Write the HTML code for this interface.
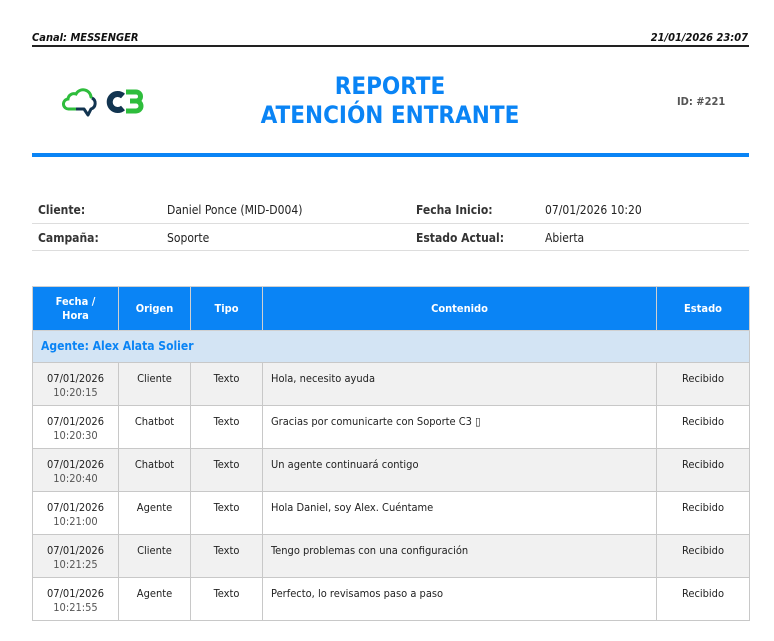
<!DOCTYPE html><html><head><meta charset="utf-8"><style>
*{margin:0;padding:0;box-sizing:border-box}
body{width:774px;height:641px;background:#fff;font-family:"DejaVu Sans Condensed","DejaVu Sans","Liberation Sans",sans-serif;color:#222;position:relative;overflow:hidden;font-size:11px}
.a{position:absolute;white-space:nowrap}
table{position:absolute;left:32px;top:286px;width:717px;border-collapse:collapse;table-layout:fixed}
td,th{border:1px solid #c8c8c8;font-size:11px;text-align:center;vertical-align:top}
th{background:#0a84f5;color:#fff;font-weight:bold;vertical-align:middle;height:44px;border-color:#d0d0d0;line-height:14px}
td{height:43px;padding-top:9px;line-height:14px}
tr.g td{background:#f1f1f1}
td.c{text-align:left;padding-left:8px}
.t{color:#555}
.ag td{background:#d3e4f4;color:#0a84f5;font-weight:bold;font-size:12px;text-align:left;height:32px;padding:8px 0 0 8px}
</style></head><body>
<div class="a" style="left:32px;top:31px;font-weight:bold;font-style:italic;font-size:11px;color:#111">Canal: MESSENGER</div>
<div class="a" style="right:26px;top:31px;font-weight:bold;font-style:italic;font-size:11px;color:#111">21/01/2026 23:07</div>
<div class="a" style="left:32px;top:45px;width:717px;height:2px;background:#222"></div>
<svg class="a" style="left:62px;top:86px" width="84" height="32" viewBox="0 0 84 32">
<path d="M14 23 H7 a5 5 0 0 1 -1-10 a6 6 0 0 1 8-5 a8 8 0 0 1 15 3" fill="none" stroke="#2ebd3c" stroke-width="3" stroke-linecap="round"/>
<path d="M14 23 H22 L26 29 L29 23 a6 6 0 0 0 1-11" fill="none" stroke="#123450" stroke-width="3" stroke-linejoin="round"/>
<path d="M61 10 a8 8 0 1 0 0 12" fill="none" stroke="#123450" stroke-width="6"/>
<path d="M64 6 h10 a4.5 4.5 0 0 1 0 9 h-6 h6 a5 5 0 0 1 0 10 h-10" fill="none" stroke="#2ebd3c" stroke-width="5"/>
</svg>
<div class="a" style="left:200px;top:72px;width:380px;text-align:center;color:#0a84f5;font-weight:bold;font-size:24px;line-height:29px">REPORTE<br>ATENCIÓN ENTRANTE</div>
<div class="a" style="left:677px;top:95px;font-weight:bold;color:#555;font-size:11px">ID: #221</div>
<div class="a" style="left:32px;top:153px;width:717px;height:4px;background:#0a84f5"></div>
<div class="a" style="left:38px;top:203px;font-weight:bold;color:#333;font-size:12px">Cliente:</div>
<div class="a" style="left:167px;top:203px;font-size:12px">Daniel Ponce (MID-D004)</div>
<div class="a" style="left:416px;top:203px;font-weight:bold;color:#333;font-size:12px">Fecha Inicio:</div>
<div class="a" style="left:545px;top:203px;font-size:12px">07/01/2026 10:20</div>
<div class="a" style="left:32px;top:223px;width:717px;height:1px;background:#ddd"></div>
<div class="a" style="left:38px;top:231px;font-weight:bold;color:#333;font-size:12px">Campaña:</div>
<div class="a" style="left:167px;top:231px;font-size:12px">Soporte</div>
<div class="a" style="left:416px;top:231px;font-weight:bold;color:#333;font-size:12px">Estado Actual:</div>
<div class="a" style="left:545px;top:231px;font-size:12px">Abierta</div>
<div class="a" style="left:32px;top:250px;width:717px;height:1px;background:#ddd"></div>
<table>
<colgroup><col style="width:86px"><col style="width:72px"><col style="width:72px"><col style="width:394px"><col style="width:93px"></colgroup>
<tr><th>Fecha /<br>Hora</th><th>Origen</th><th>Tipo</th><th>Contenido</th><th>Estado</th></tr>
<tr class="ag"><td colspan="5">Agente: Alex Alata Solier</td></tr>
<tr class="g"><td>07/01/2026<br><span class="t">10:20:15</span></td><td>Cliente</td><td>Texto</td><td class="c">Hola, necesito ayuda</td><td>Recibido</td></tr>
<tr><td>07/01/2026<br><span class="t">10:20:30</span></td><td>Chatbot</td><td>Texto</td><td class="c">Gracias por comunicarte con Soporte C3 ▯</td><td>Recibido</td></tr>
<tr class="g"><td>07/01/2026<br><span class="t">10:20:40</span></td><td>Chatbot</td><td>Texto</td><td class="c">Un agente continuará contigo</td><td>Recibido</td></tr>
<tr><td>07/01/2026<br><span class="t">10:21:00</span></td><td>Agente</td><td>Texto</td><td class="c">Hola Daniel, soy Alex. Cuéntame</td><td>Recibido</td></tr>
<tr class="g"><td>07/01/2026<br><span class="t">10:21:25</span></td><td>Cliente</td><td>Texto</td><td class="c">Tengo problemas con una configuración</td><td>Recibido</td></tr>
<tr><td>07/01/2026<br><span class="t">10:21:55</span></td><td>Agente</td><td>Texto</td><td class="c">Perfecto, lo revisamos paso a paso</td><td>Recibido</td></tr>
</table>
</body></html>
